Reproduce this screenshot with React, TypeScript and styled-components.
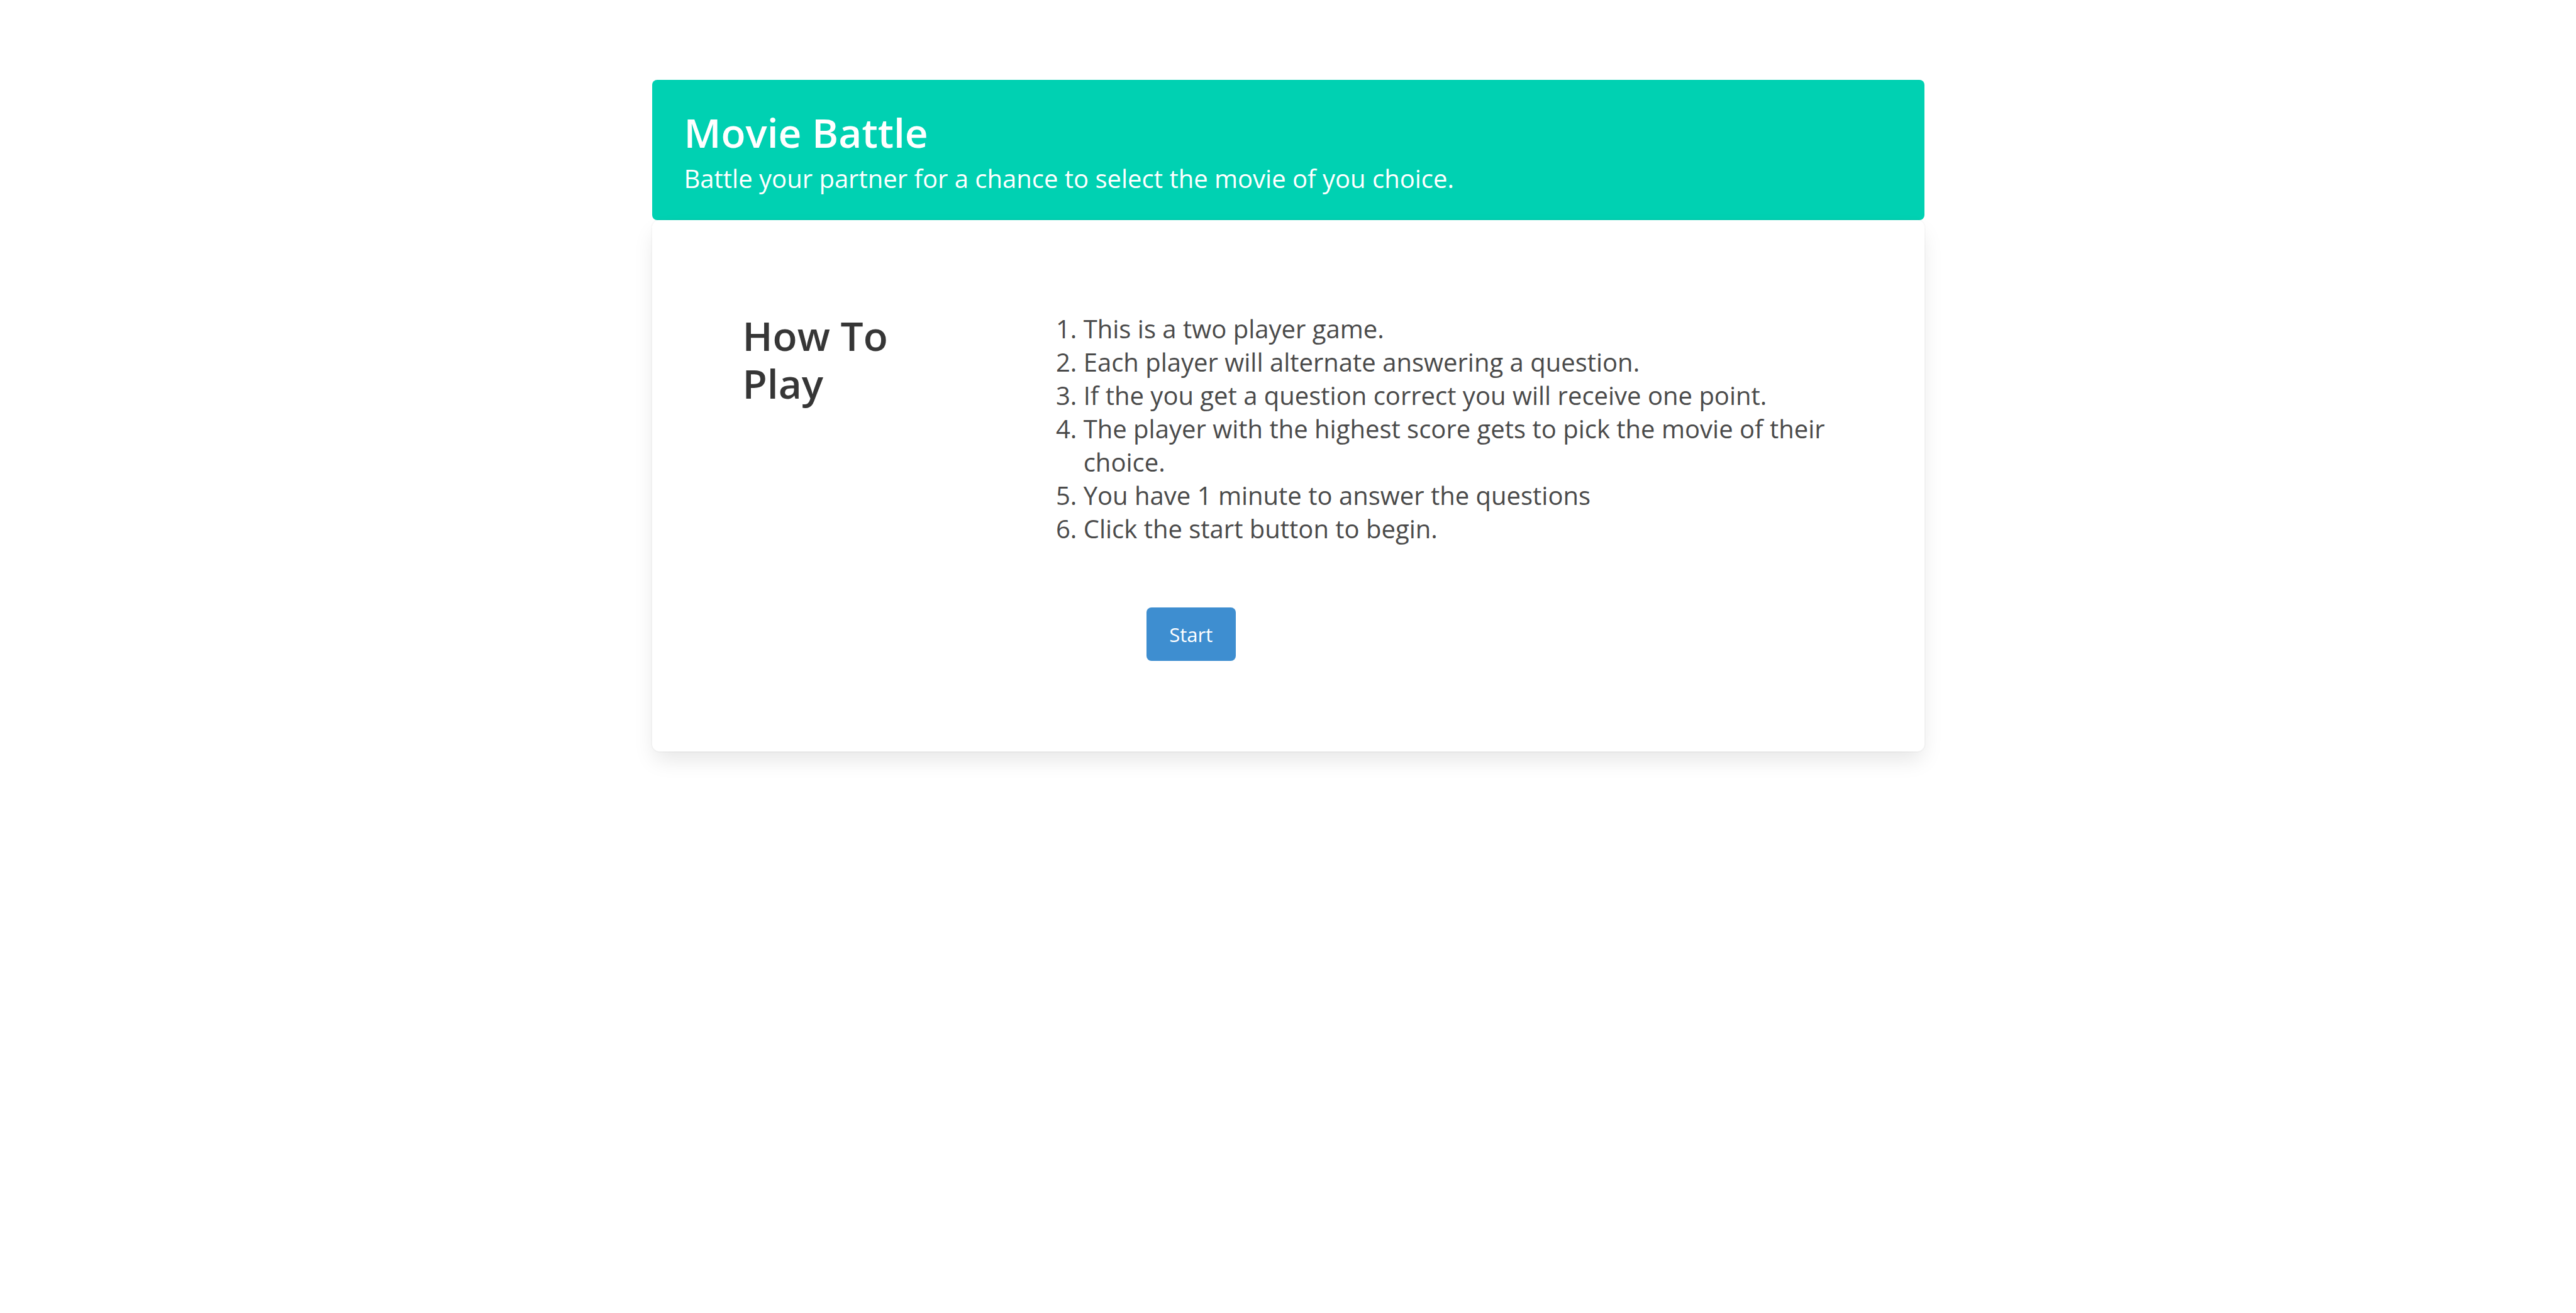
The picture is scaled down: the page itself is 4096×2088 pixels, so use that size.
import React from "react";
import styled, { createGlobalStyle } from "styled-components";

const GlobalStyle = createGlobalStyle`
  *, *::before, *::after {
    box-sizing: border-box;
  }

  body {
    margin: 0;
    background: #ffffff;
    color: #4a4a4a;
    font-family: "Open Sans", "Noto Sans", sans-serif;
    font-size: 40px;
    line-height: 53px;
  }
`;

const Page = styled.main`
  display: flex;
  flex-direction: column;
  width: calc(50% - 25px);
  margin: 0 auto;
  padding: 127px 0;
`;

const Hero = styled.header`
  display: flex;
  flex-direction: column;
  gap: 8px;
  padding: 46px 51px 40px;
  border-radius: 8px;
  background: #00d1b2;
  color: #ffffff;
`;

const Heading = styled.h1`
  margin: 0;
  color: ${({ color }) => color ?? "inherit"};
  font-size: 64px;
  font-weight: 600;
  line-height: 76px;
`;

const Tagline = styled.p`
  margin: 0;
`;

const Card = styled.section`
  display: grid;
  grid-template-columns: 1fr 4fr;
  column-gap: 134px;
  padding: 146px 144px 144px;
  border-radius: 12px;
  background: #ffffff;
  box-shadow:
    0 17px 34px -4px rgba(10, 10, 10, 0.1),
    0 0 0 2px rgba(10, 10, 10, 0.02);
`;

const Instructions = styled.div`
  display: flex;
  flex-direction: column;
  align-items: flex-start;
  gap: 99px;
`;

const RuleList = styled.ol`
  margin: 0;
  padding: 0 0 0 88px;
`;

const StartButton = styled.button`
  min-width: 142px;
  height: 85px;
  margin-left: 188px;
  padding: 0 34px;
  border: 0;
  border-radius: 8px;
  background: #3e8ed0;
  color: #ffffff;
  font-family: inherit;
  font-size: 31px;
  cursor: pointer;
`;

const rules = [
  "This is a two player game.",
  "Each player will alternate answering a question.",
  "If the you get a question correct you will receive one point.",
  "The player with the highest score gets to pick the movie of their choice.",
  "You have 1 minute to answer the questions",
  "Click the start button to begin.",
];

export default function App() {
  return (
    <>
      <GlobalStyle />
      <Page>
        <Hero>
          <Heading>Movie Battle</Heading>
          <Tagline>
            Battle your partner for a chance to select the movie of you choice.
          </Tagline>
        </Hero>
        <Card>
          <Heading as="h2" color="#363636">
            How To Play
          </Heading>
          <Instructions>
            <RuleList>
              {rules.map((rule) => (
                <li key={rule}>{rule}</li>
              ))}
            </RuleList>
            <StartButton type="button">Start</StartButton>
          </Instructions>
        </Card>
      </Page>
    </>
  );
}
